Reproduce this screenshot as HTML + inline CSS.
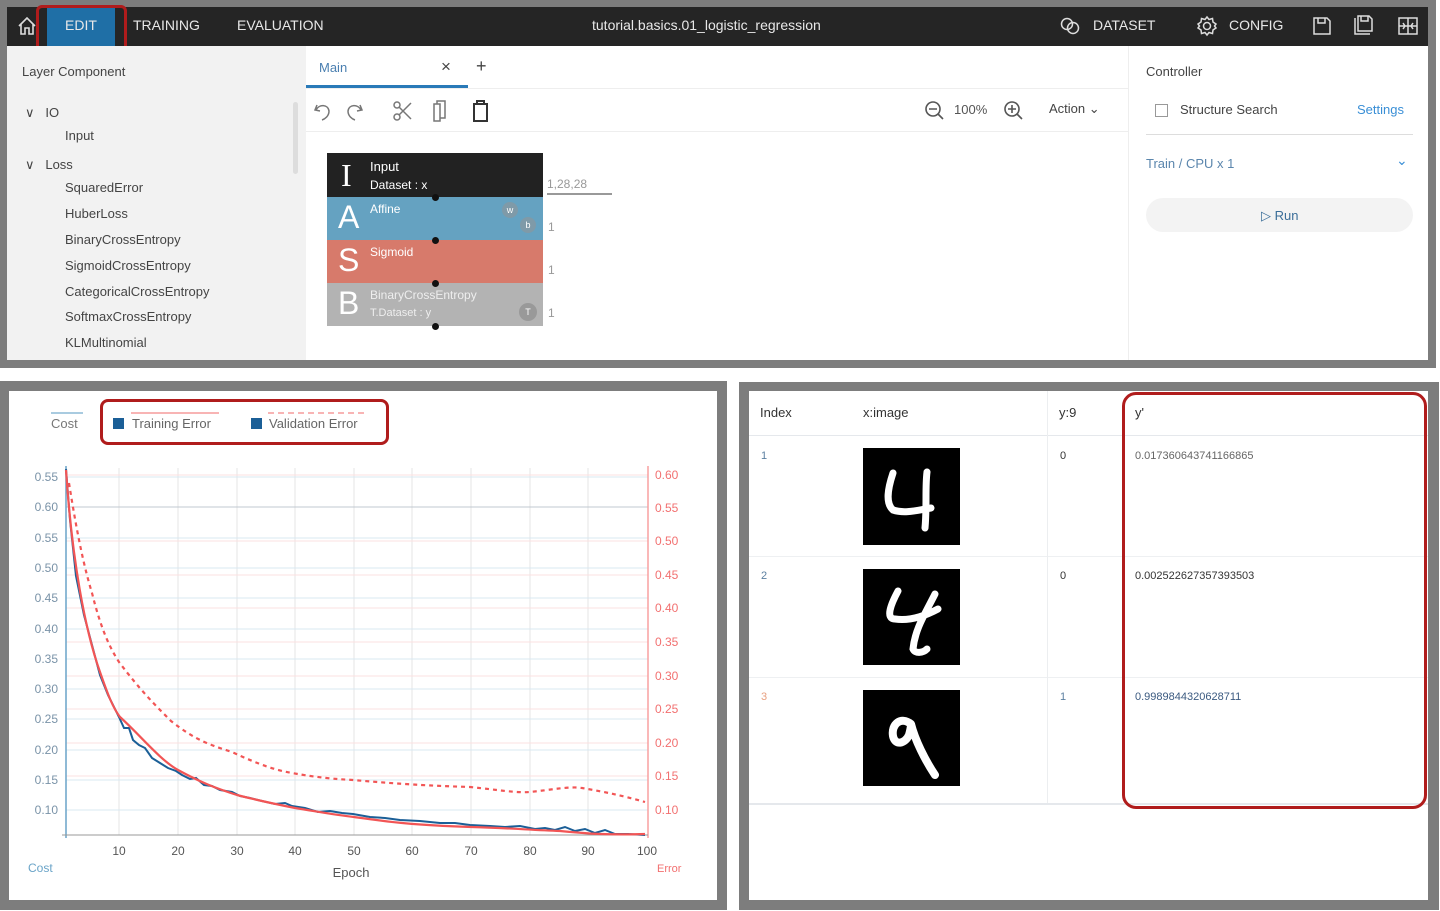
<!DOCTYPE html>
<html><head><meta charset="utf-8">
<style>
*{box-sizing:border-box;margin:0;padding:0}
body{width:1440px;height:911px;background:#fff;position:relative;overflow:hidden;font-family:"Liberation Sans",sans-serif;}
.a{position:absolute}
.t{position:absolute;white-space:nowrap}
.nav .t{color:#e8e8e8;font-size:14px;top:10px}
.lc{font-size:13px;color:#444}
</style></head><body>
<div class="a" style="left:0;top:0;width:1436px;height:368px;background:#7d7d7d"></div>
<div class="a" style="left:7px;top:46px;width:1421px;height:314px;background:#fff"></div>
<div class="a nav" style="left:7px;top:7px;width:1421px;height:39px;background:#252525">
 <svg class="a" style="left:9px;top:8px" width="22" height="22" viewBox="0 0 22 22" fill="none" stroke="#ddd" stroke-width="1.6"><path d="M3 11 L11 3 L19 11 M5 9 V19 H9 V13 H13 V19 H17 V9"/></svg>
 <div class="a" style="left:40px;top:0;width:68px;height:39px;background:#1f6fa6"></div>
 <div class="t" style="left:58px">EDIT</div>
 <div class="t" style="left:126px">TRAINING</div>
 <div class="t" style="left:230px">EVALUATION</div>
 <div class="t" style="left:585px">tutorial.basics.01_logistic_regression</div>
 <svg class="a" style="left:1052px;top:9px" width="24" height="20" viewBox="0 0 24 20" fill="none" stroke="#ddd" stroke-width="1.5"><circle cx="8" cy="8" r="5.5"/><circle cx="14" cy="12" r="5.5"/></svg>
 <div class="t" style="left:1086px">DATASET</div>
 <svg class="a" style="left:1189px;top:8px" width="22" height="22" viewBox="0 0 22 22" fill="none" stroke="#ddd" stroke-width="1.5"><circle cx="11" cy="11" r="3.5"/><path d="M11 2 L13 4.5 L16.5 3.5 L17 7 L20 9 L18.5 11 L20 13 L17 15 L16.5 18.5 L13 17.5 L11 20 L9 17.5 L5.5 18.5 L5 15 L2 13 L3.5 11 L2 9 L5 7 L5.5 3.5 L9 4.5Z"/></svg>
 <div class="t" style="left:1222px">CONFIG</div>
 <svg class="a" style="left:1305px;top:9px" width="20" height="20" viewBox="0 0 20 20" fill="none" stroke="#ddd" stroke-width="1.5"><path d="M2 2 H15 L18 5 V18 H2Z M6 2 V7 H13 V2"/></svg>
 <svg class="a" style="left:1346px;top:7px" width="22" height="22" viewBox="0 0 22 22" fill="none" stroke="#ddd" stroke-width="1.5"><path d="M2 4 V20 H17 M5 2 H16 L19 5 V17 H5Z M8 2 V7 H15 V2"/></svg>
 <svg class="a" style="left:1390px;top:8px" width="22" height="22" viewBox="0 0 22 22" fill="none" stroke="#ddd" stroke-width="1.5"><rect x="2" y="3" width="18" height="16"/><path d="M11 3 V19 M2 11 H20 M6 8 L8 11 L6 14 M16 8 L14 11 L16 14"/></svg>
</div>
<div class="a" style="left:36px;top:5px;width:91px;height:49px;border:3px solid #b01c1c;border-radius:6px"></div>
<div class="a" style="left:7px;top:46px;width:299px;height:314px;background:#f2f2f2"></div>
<div class="a" style="left:293px;top:102px;width:5px;height:72px;background:#ddd;border-radius:3px"></div>
<div class="t lc" style="left:22px;top:64px">Layer Component</div>
<div class="t lc" style="left:25px;top:105px">&#8744;&nbsp;&nbsp; IO</div>
<div class="t lc" style="left:65px;top:128px">Input</div>
<div class="t lc" style="left:25px;top:157px">&#8744;&nbsp;&nbsp; Loss</div>
<div class="t lc" style="left:65px;top:180px">SquaredError</div>
<div class="t lc" style="left:65px;top:206px">HuberLoss</div>
<div class="t lc" style="left:65px;top:232px">BinaryCrossEntropy</div>
<div class="t lc" style="left:65px;top:258px">SigmoidCrossEntropy</div>
<div class="t lc" style="left:65px;top:284px">CategoricalCrossEntropy</div>
<div class="t lc" style="left:65px;top:309px">SoftmaxCrossEntropy</div>
<div class="t lc" style="left:65px;top:335px">KLMultinomial</div>
<div class="t" style="left:319px;top:60px;font-size:13px;color:#4a7fb0">Main</div>
<div class="t" style="left:441px;top:57px;font-size:17px;color:#444">×</div>
<div class="t" style="left:476px;top:56px;font-size:18px;color:#444">+</div>
<div class="a" style="left:306px;top:85px;width:162px;height:3px;background:#2a7ab8"></div>
<div class="a" style="left:306px;top:88px;width:822px;height:1px;background:#eee"></div>
<div class="a" style="left:306px;top:131px;width:822px;height:1px;background:#eee"></div>
<svg class="a" style="left:312px;top:98px" width="185" height="26" viewBox="0 0 185 26" fill="none" stroke="#777" stroke-width="1.5">
<path d="M5 7 L3 12 L8 13 M4 12 C7 6 16 6 17 13 C17 18 13 21 10 22"/>
<path d="M48 7 L50 12 L45 13 M49 12 C46 6 37 6 36 13 C36 18 40 21 43 22"/>
<circle cx="85" cy="19" r="3"/><circle cx="85" cy="7" r="3"/><path d="M87 17 L99 5 M87 9 L99 21"/>
<path d="M122 6 H128 V23 H122Z M125 6 V3 H133 V20 H128"/>
<path d="M162 6 H175 V23 H162Z M165 6 V3 H172 V6" stroke="#333" stroke-width="2"/>
</svg>
<svg class="a" style="left:923px;top:99px" width="105" height="24" viewBox="0 0 105 24" fill="none" stroke="#555" stroke-width="1.6"><circle cx="10" cy="10" r="7"/><path d="M6 10H14 M15 15 L20 20"/><circle cx="89" cy="10" r="7"/><path d="M85 10H93 M89 6V14 M94 15 L99 20"/></svg>
<div class="t" style="left:954px;top:102px;font-size:13px;color:#555">100%</div>
<div class="t" style="left:1049px;top:101px;font-size:13px;color:#444">Action &#8964;</div>
<div class="a" style="left:327px;top:153px;width:216px;height:44px;background:#222"></div>
<div class="a" style="left:327px;top:197px;width:216px;height:43px;background:#65a2c1"></div>
<div class="a" style="left:327px;top:240px;width:216px;height:43px;background:#d77a6b"></div>
<div class="a" style="left:327px;top:283px;width:216px;height:43px;background:#b3b3b3"></div>
<div class="t" style="left:341px;top:157px;font-size:32px;color:#fff;font-family:'Liberation Serif',serif">I</div>
<div class="t" style="left:338px;top:199px;font-size:32px;color:#fff">A</div>
<div class="t" style="left:338px;top:242px;font-size:32px;color:#fff">S</div>
<div class="t" style="left:338px;top:285px;font-size:32px;color:#fff">B</div>
<div class="t" style="left:370px;top:159px;font-size:13px;color:#fff">Input</div>
<div class="t" style="left:370px;top:178px;font-size:12px;color:#fff">Dataset : x</div>
<div class="t" style="left:370px;top:202px;font-size:12px;color:#fff">Affine</div>
<div class="t" style="left:370px;top:245px;font-size:12px;color:#fff">Sigmoid</div>
<div class="t" style="left:370px;top:288px;font-size:12px;color:#eee">BinaryCrossEntropy</div>
<div class="t" style="left:370px;top:307px;font-size:11px;color:#eee">T.Dataset : y</div>
<div class="a" style="left:502px;top:202px;width:16px;height:16px;border-radius:8px;background:#7f9aa8;color:#fff;font-size:9px;text-align:center;line-height:16px">w</div>
<div class="a" style="left:520px;top:217px;width:16px;height:16px;border-radius:8px;background:#7f9aa8;color:#fff;font-size:9px;text-align:center;line-height:16px">b</div>
<div class="a" style="left:519px;top:303px;width:18px;height:18px;border-radius:9px;background:#999;color:#fff;font-size:9px;text-align:center;line-height:18px">T</div>
<div class="a" style="left:432px;top:194px;width:7px;height:7px;border-radius:4px;background:#111"></div>
<div class="a" style="left:432px;top:237px;width:7px;height:7px;border-radius:4px;background:#111"></div>
<div class="a" style="left:432px;top:280px;width:7px;height:7px;border-radius:4px;background:#111"></div>
<div class="a" style="left:432px;top:323px;width:7px;height:7px;border-radius:4px;background:#111"></div>
<div class="t" style="left:547px;top:177px;font-size:12px;color:#999">1,28,28</div>
<div class="a" style="left:547px;top:193px;width:65px;height:2px;background:#999"></div>
<div class="t" style="left:548px;top:220px;font-size:12px;color:#999">1</div>
<div class="t" style="left:548px;top:263px;font-size:12px;color:#999">1</div>
<div class="t" style="left:548px;top:306px;font-size:12px;color:#999">1</div>
<div class="a" style="left:1128px;top:46px;width:1px;height:314px;background:#eee"></div>
<div class="t" style="left:1146px;top:64px;font-size:13px;color:#444">Controller</div>
<div class="a" style="left:1155px;top:104px;width:13px;height:13px;border:1px solid #999"></div>
<div class="t" style="left:1180px;top:102px;font-size:13px;color:#444">Structure Search</div>
<div class="t" style="left:1357px;top:102px;font-size:13px;color:#3a8fd6">Settings</div>
<div class="a" style="left:1146px;top:134px;width:267px;height:1px;background:#ddd"></div>
<div class="t" style="left:1146px;top:156px;font-size:13px;color:#5b86ad">Train / CPU x 1</div>
<div class="t" style="left:1396px;top:152px;font-size:14px;color:#3a8fd6">&#8964;</div>
<div class="a" style="left:1146px;top:198px;width:267px;height:34px;border-radius:17px;background:#f3f3f3"></div>
<div class="t" style="left:1261px;top:208px;font-size:13px;color:#3b6e99">&#9655; Run</div>

<div class="a" style="left:0;top:381px;width:727px;height:529px;background:#7d7d7d"></div>
<div class="a" style="left:9px;top:391px;width:708px;height:509px;background:#fff"></div>
<div class="a" style="left:51px;top:412px;width:32px;height:2px;background:#a9cbe0"></div>
<div class="t" style="left:51px;top:416px;font-size:13px;color:#777">Cost</div>
<div class="a" style="left:131px;top:412px;width:88px;height:2px;background:#f8b4b4"></div>
<div class="a" style="left:113px;top:418px;width:11px;height:11px;background:#1b5f97"></div>
<div class="t" style="left:132px;top:416px;font-size:13px;color:#666">Training Error</div>
<div class="a" style="left:268px;top:412px;width:96px;border-top:2px dashed #f8b4b4"></div>
<div class="a" style="left:251px;top:418px;width:11px;height:11px;background:#1b5f97"></div>
<div class="t" style="left:269px;top:416px;font-size:13px;color:#666">Validation Error</div>
<div class="a" style="left:100px;top:399px;width:289px;height:46px;border:3px solid #b01c1c;border-radius:8px"></div>
<svg class="a" style="left:0;top:0" width="727" height="911" font-family="Liberation Sans" font-size="12">
<g stroke="#e6e6e6"><line x1="119" y1="468" x2="119" y2="835"/><line x1="178" y1="468" x2="178" y2="835"/><line x1="237" y1="468" x2="237" y2="835"/><line x1="295" y1="468" x2="295" y2="835"/><line x1="354" y1="468" x2="354" y2="835"/><line x1="412" y1="468" x2="412" y2="835"/><line x1="471" y1="468" x2="471" y2="835"/><line x1="530" y1="468" x2="530" y2="835"/><line x1="588" y1="468" x2="588" y2="835"/></g>
<g stroke="#d8e8f2"><line x1="66" y1="477" x2="648" y2="477"/><line x1="66" y1="538" x2="648" y2="538"/><line x1="66" y1="568" x2="648" y2="568"/><line x1="66" y1="598" x2="648" y2="598"/><line x1="66" y1="629" x2="648" y2="629"/><line x1="66" y1="659" x2="648" y2="659"/><line x1="66" y1="689" x2="648" y2="689"/><line x1="66" y1="719" x2="648" y2="719"/><line x1="66" y1="750" x2="648" y2="750"/><line x1="66" y1="780" x2="648" y2="780"/><line x1="66" y1="810" x2="648" y2="810"/></g>
<line x1="66" y1="507" x2="648" y2="507" stroke="#c0c8d0"/>
<g stroke="#fbe0e0"><line x1="66" y1="475" x2="648" y2="475"/><line x1="66" y1="541" x2="648" y2="541"/><line x1="66" y1="575" x2="648" y2="575"/><line x1="66" y1="608" x2="648" y2="608"/><line x1="66" y1="642" x2="648" y2="642"/><line x1="66" y1="676" x2="648" y2="676"/><line x1="66" y1="709" x2="648" y2="709"/><line x1="66" y1="743" x2="648" y2="743"/><line x1="66" y1="776" x2="648" y2="776"/></g>
<line x1="66" y1="466" x2="66" y2="838" stroke="#6aa4c8" stroke-width="1.5"/>
<line x1="648" y1="466" x2="648" y2="838" stroke="#f8a0a0" stroke-width="1.5"/>
<line x1="62" y1="835" x2="648" y2="835" stroke="#999"/>
<g fill="#7a93a8" text-anchor="end"><text x="58" y="481">0.55</text><text x="58" y="511">0.60</text><text x="58" y="542">0.55</text><text x="58" y="572">0.50</text><text x="58" y="602">0.45</text><text x="58" y="633">0.40</text><text x="58" y="663">0.35</text><text x="58" y="693">0.30</text><text x="58" y="723">0.25</text><text x="58" y="754">0.20</text><text x="58" y="784">0.15</text><text x="58" y="814">0.10</text></g>
<g fill="#f27070"><text x="655" y="479">0.60</text><text x="655" y="512">0.55</text><text x="655" y="545">0.50</text><text x="655" y="579">0.45</text><text x="655" y="612">0.40</text><text x="655" y="646">0.35</text><text x="655" y="680">0.30</text><text x="655" y="713">0.25</text><text x="655" y="747">0.20</text><text x="655" y="780">0.15</text><text x="655" y="814">0.10</text></g>
<g fill="#555" text-anchor="middle"><text x="119" y="855">10</text><text x="178" y="855">20</text><text x="237" y="855">30</text><text x="295" y="855">40</text><text x="354" y="855">50</text><text x="412" y="855">60</text><text x="471" y="855">70</text><text x="530" y="855">80</text><text x="588" y="855">90</text><text x="647" y="855">100</text><text x="351" y="877" font-size="13">Epoch</text></g>
<text x="28" y="872" fill="#6aa4c8">Cost</text><text x="657" y="872" fill="#f27070" font-size="11">Error</text>
<path d="M69 483 C78 540 85 570 92 593 C100 625 108 645 119 662 C140 690 155 705 171 721 C195 740 210 745 232 752 C260 765 275 770 292 773 C320 778 335 779 353 780 C410 785 440 786 470 787 C500 790 515 793 530 792 C550 790 570 786 582 788 C605 792 620 795 645 802" fill="none" stroke="#f25555" stroke-width="2.2" stroke-dasharray="4 4"/>
<path d="M66 469 L70 520 L76 576 L84 615 L92 645 L100 675 L108 695 L119 717 L124 728 L129 728 L133 740 L139 745 L145 748 L152 758 L160 763 L168 768 L176 771 L182 775 L190 779 L196 778 L204 785 L212 786 L220 790 L232 792 L240 796 L250 798 L262 801 L275 804 L285 803 L292 806 L305 808 L318 812 L330 811 L342 813 L353 814 L370 817 L385 818 L400 820 L420 821 L440 823 L455 823 L470 825 L490 826 L505 827 L520 826 L535 829 L545 828 L555 830 L565 827 L575 831 L585 829 L595 833 L605 830 L615 834 L628 834 L645 835" fill="none" stroke="#1b5f97" stroke-width="2"/>
<path d="M66 470 C72 560 85 630 100 672 C108 695 113 708 120 717 C140 735 160 760 178 770 C200 782 215 788 237 795 C260 801 275 804 295 808 C320 812 335 815 354 817 C390 822 410 825 471 827 C510 828 530 830 560 831 C590 834 610 835 645 834" fill="none" stroke="#f25555" stroke-width="2.2"/>
</svg>

<div class="a" style="left:739px;top:382px;width:700px;height:528px;background:#7d7d7d"></div>
<div class="a" style="left:749px;top:391px;width:679px;height:509px;background:#fff"></div>
<div class="a" style="left:749px;top:435px;width:679px;height:1px;background:#e5e8ec"></div>
<div class="a" style="left:749px;top:556px;width:679px;height:1px;background:#eef0f2"></div>
<div class="a" style="left:749px;top:677px;width:679px;height:1px;background:#eef0f2"></div>
<div class="a" style="left:749px;top:803px;width:679px;height:2px;background:#e5e8ec"></div>
<div class="a" style="left:1047px;top:391px;width:1px;height:412px;background:#eceef0"></div>
<div class="t" style="left:760px;top:405px;font-size:13px;color:#333">Index</div>
<div class="t" style="left:863px;top:405px;font-size:13px;color:#333">x:image</div>
<div class="t" style="left:1059px;top:405px;font-size:13px;color:#333">y:9</div>
<div class="t" style="left:1135px;top:405px;font-size:13px;color:#333">y'</div>
<div class="t" style="left:761px;top:450px;font-size:11px;color:#5b7fa0">1</div>
<div class="t" style="left:761px;top:570px;font-size:11px;color:#5b7fa0">2</div>
<div class="t" style="left:761px;top:691px;font-size:11px;color:#e8a080">3</div>
<div class="t" style="left:1060px;top:450px;font-size:11px;color:#333">0</div>
<div class="t" style="left:1060px;top:570px;font-size:11px;color:#333">0</div>
<div class="t" style="left:1060px;top:691px;font-size:11px;color:#5b7fa0">1</div>
<div class="t" style="left:1135px;top:450px;font-size:11px;color:#666">0.017360643741166865</div>
<div class="t" style="left:1135px;top:570px;font-size:11px;color:#333">0.002522627357393503</div>
<div class="t" style="left:1135px;top:691px;font-size:11px;color:#3b5a80">0.9989844320628711</div>
<svg class="a" style="left:863px;top:448px" width="97" height="97" viewBox="0 0 97 97"><rect width="97" height="97" fill="#000"/><path d="M30 25 C25 40 22 55 30 62 C42 66 55 62 68 60 M64 24 C62 40 64 58 62 80" stroke="#fff" stroke-width="7" fill="none" stroke-linecap="round"/></svg>
<svg class="a" style="left:863px;top:569px" width="97" height="96" viewBox="0 0 97 96"><rect width="97" height="96" fill="#000"/><path d="M35 22 C28 35 22 50 32 50 C45 52 60 48 75 40 M72 25 C62 45 52 60 50 80 C52 85 60 84 64 80" stroke="#fff" stroke-width="7" fill="none" stroke-linecap="round"/></svg>
<svg class="a" style="left:863px;top:690px" width="97" height="96" viewBox="0 0 97 96"><rect width="97" height="96" fill="#000"/><path d="M48 34 C38 26 28 34 30 46 C32 56 42 54 46 45 C48 38 48 34 48 34 C52 50 62 70 72 85" stroke="#fff" stroke-width="8" fill="none" stroke-linecap="round"/></svg>
<div class="a" style="left:1122px;top:392px;width:305px;height:417px;border:3px solid #b01c1c;border-radius:14px"></div>
</body></html>
